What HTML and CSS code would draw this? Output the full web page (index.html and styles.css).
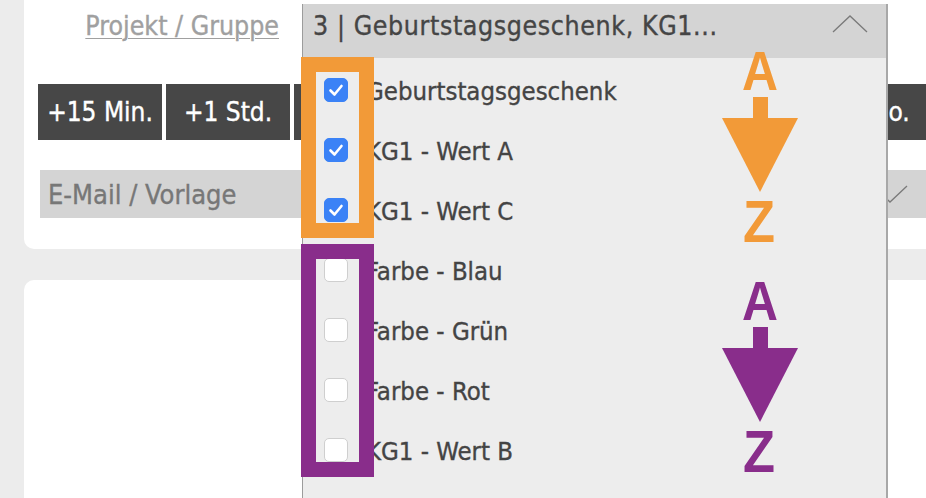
FILE: index.html
```html
<!DOCTYPE html>
<html lang="de">
<head>
<meta charset="utf-8">
<title>Projekt / Gruppe</title>
<link rel="stylesheet" href="styles.css">
</head>
<body>
<div class="page">
  <section class="card card-top">
    <div class="row-project">
      <div class="label-col"><a class="label-link" href="#">Projekt / Gruppe</a></div>
      <div class="dropdown">
        <div class="dd-header">
          <span class="dd-value">3 | Geburtstagsgeschenk, KG1...</span>
          <svg class="chev-up" width="36" height="18" viewBox="0 0 36 18"><polyline points="1,17 18,1 35,17" fill="none" stroke="#7a7a7a" stroke-width="1.3"/></svg>
        </div>
        <ul class="dd-list">
          <li class="dd-item"><span class="cb cb-on"><svg width="24" height="24" viewBox="0 0 24 24"><polyline points="6.5,12.5 10.5,16.5 17.5,8" fill="none" stroke="#fff" stroke-width="2.6" stroke-linecap="round" stroke-linejoin="round"/></svg></span><span class="dd-text">Geburtstagsgeschenk</span></li>
          <li class="dd-item"><span class="cb cb-on"><svg width="24" height="24" viewBox="0 0 24 24"><polyline points="6.5,12.5 10.5,16.5 17.5,8" fill="none" stroke="#fff" stroke-width="2.6" stroke-linecap="round" stroke-linejoin="round"/></svg></span><span class="dd-text">KG1 - Wert A</span></li>
          <li class="dd-item"><span class="cb cb-on"><svg width="24" height="24" viewBox="0 0 24 24"><polyline points="6.5,12.5 10.5,16.5 17.5,8" fill="none" stroke="#fff" stroke-width="2.6" stroke-linecap="round" stroke-linejoin="round"/></svg></span><span class="dd-text">KG1 - Wert C</span></li>
          <li class="dd-item"><span class="cb"></span><span class="dd-text">Farbe - Blau</span></li>
          <li class="dd-item"><span class="cb"></span><span class="dd-text">Farbe - Grün</span></li>
          <li class="dd-item"><span class="cb"></span><span class="dd-text">Farbe - Rot</span></li>
          <li class="dd-item"><span class="cb"></span><span class="dd-text">KG1 - Wert B</span></li>
        </ul>
        <div class="mark mark-orange"></div>
        <div class="mark mark-purple"></div>
        <svg class="sort sort-orange" width="76" height="222" viewBox="0 0 76 222">
          <text x="38" y="54" text-anchor="middle" textLength="36" lengthAdjust="spacingAndGlyphs" class="sort-letter sort-a">A</text>
          <rect x="31" y="61" width="15" height="23"/>
          <polygon points="0,82 76,82 38,156"/>
          <text x="37" y="206" text-anchor="middle" textLength="32" lengthAdjust="spacingAndGlyphs" class="sort-letter sort-z">Z</text>
        </svg>
        <svg class="sort sort-purple" width="76" height="222" viewBox="0 0 76 222">
          <text x="38" y="54" text-anchor="middle" textLength="36" lengthAdjust="spacingAndGlyphs" class="sort-letter sort-a">A</text>
          <rect x="31" y="61" width="15" height="23"/>
          <polygon points="0,82 76,82 38,156"/>
          <text x="37" y="206" text-anchor="middle" textLength="32" lengthAdjust="spacingAndGlyphs" class="sort-letter sort-z">Z</text>
        </svg>
      </div>
    </div>
    <div class="btn-row">
      <button class="btn">+15 Min.</button>
      <button class="btn">+1 Std.</button>
      <button class="btn">+3 Std.</button>
      <button class="btn">+1 Tag</button>
      <button class="btn">+2 Tage</button>
      <button class="btn">+1 Wo.</button>
      <button class="btn">+1 Mo.</button>
    </div>
    <div class="select-email">
      <span class="select-text">E-Mail / Vorlage</span>
      <svg class="chev-down" width="36" height="18" viewBox="0 0 36 18"><polyline points="1,1 18,17 35,1" fill="none" stroke="#7a7a7a" stroke-width="1.3"/></svg>
    </div>
  </section>
  <section class="card card-bottom"></section>
</div>
</body>
</html>
```
FILE: styles.css
```css
* { box-sizing: border-box; }
html, body { margin: 0; padding: 0; }
body {
  background: #ececec;
  overflow: hidden;
  width: 926px;
  height: 498px;
  font-family: "DejaVu Sans Condensed", "DejaVu Sans", sans-serif;
  -webkit-text-stroke: 0.35px currentColor;
}
.page {
  padding-left: 24px;
  display: flex;
  flex-direction: column;
  gap: 31px;
}
.card {
  background: #fff;
  width: 918px;
}
.card-top {
  height: 249px;
  border-radius: 0 0 10px 10px;
  padding: 4px 14px 0 14px;
}
.card-bottom {
  height: 260px;
  border-radius: 10px 10px 0 0;
}
.row-project {
  display: flex;
  gap: 23px;
  height: 54px;
}
.label-col {
  width: 241px;
  text-align: right;
  padding-top: 6px;
  white-space: nowrap;
}
.label-link {
  color: #a0a0a0;
  font-size: 26.5px;
  text-decoration: underline;
  text-decoration-thickness: 1px;
  text-underline-offset: 3px;
}
.dropdown {
  position: relative;
  width: 586px;
  z-index: 2;
}
.dd-header {
  height: 54px;
  background: #d4d4d4;
  border-left: 1px solid #9c9c9c;
  border-right: 2px solid #a8a8a8;
  display: flex;
  align-items: center;
  padding-left: 10px;
  padding-bottom: 12px;
  position: relative;
}
.dd-value {
  color: #454545;
  font-size: 26.5px;
  letter-spacing: 0.6px;
  white-space: nowrap;
}
.chev-up {
  position: absolute;
  right: 18px;
  top: 11px;
}
.dd-list {
  position: absolute;
  left: 0;
  top: 54px;
  width: 586px;
  height: 470px;
  margin: 0;
  padding: 2px 0 0 0;
  list-style: none;
  background: #ededed;
  border-left: 1px solid #9c9c9c;
  border-right: 2px solid #a8a8a8;
}
.dd-item {
  height: 60px;
  display: flex;
  align-items: center;
  padding-left: 21px;
  gap: 18px;
}
.dd-text {
  color: #444;
  font-size: 25.5px;
  padding-top: 1px;
  white-space: nowrap;
}
.cb {
  width: 24px;
  height: 24px;
  border-radius: 5px;
  background: #fff;
  border: 1px solid #cfcfcf;
  display: flex;
  flex-shrink: 0;
}
.cb-on {
  background: #3b82f6;
  border-color: #3b82f6;
}
.cb-on svg { margin: -1px; }
.mark {
  position: absolute;
  left: -1px;
  width: 73px;
  border-style: solid;
  border-width: 15px;
}
.mark-orange {
  top: 53px;
  height: 181px;
  border-color: #f29a38;
}
.mark-purple {
  top: 240px;
  height: 233px;
  border-color: #892d8b;
}
.sort {
  position: absolute;
  left: 420px;
  overflow: visible;
}
.sort-orange { top: 32px; fill: #f29a38; }
.sort-purple { top: 262px; fill: #892d8b; }
.sort-letter {
  font-family: "Liberation Sans", Arial, sans-serif;
  font-weight: 700;
  -webkit-text-stroke: 0;
}
.sort-a { font-size: 56px; }
.sort-z { font-size: 59px; }
.btn-row {
  display: flex;
  gap: 4px;
  margin-top: 26px;
}
.btn {
  flex: 0 0 124px;
  height: 56px;
  background: #474747;
  color: #fff;
  border: 0;
  padding: 0;
  font-family: "DejaVu Sans Condensed", "DejaVu Sans", sans-serif;
  font-size: 26px;
  white-space: nowrap;
}
.select-email {
  margin: 30px 0 0 2px;
  height: 48px;
  background: #d4d4d4;
  position: relative;
  display: flex;
  align-items: center;
  padding: 0 0 0 8px;
}
.select-text {
  color: #777;
  font-size: 27px;
  white-space: nowrap;
}
.chev-down {
  position: absolute;
  right: 20px;
  top: 15px;
}
```
